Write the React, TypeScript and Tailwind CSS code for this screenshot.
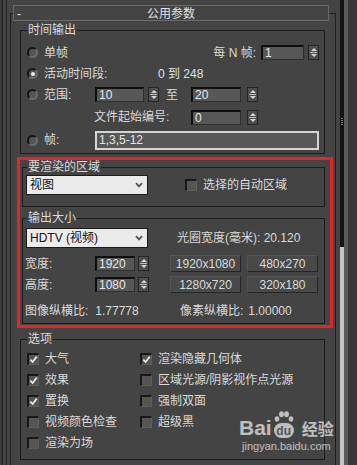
import React from 'react';

const Radio: React.FC<{ on?: boolean }> = ({ on }) => (
  <span className="flex h-[11px] w-[11px] shrink-0 items-center justify-center rounded-full border-2 border-[#151515] border-r-[#6a6a6a] border-b-[#6a6a6a] bg-[#555]">
    {on && <span className="h-[4px] w-[4px] rounded-full bg-[#f0f0f0]" />}
  </span>
);

const Spin: React.FC = () => (
  <span className="flex h-[15px] w-[11px] shrink-0 flex-col items-center justify-center gap-[1px] border border-[#252525] bg-[#4e4e4e]">
    <span className="h-0 w-0 border-x-[3px] border-b-[3px] border-x-transparent border-b-[#d6d6d6]" />
    <span className="h-px w-[7px] bg-[#bdbdbd]" />
    <span className="h-0 w-0 border-x-[3px] border-t-[3px] border-x-transparent border-t-[#d6d6d6]" />
  </span>
);

const Field: React.FC<{ v: string; w: string }> = ({ v, w }) => (
  <span className={`flex h-[15px] shrink-0 items-center border border-[#303030] border-t-2 border-l-2 border-t-[#0e0e0e] border-l-[#0e0e0e] bg-[#575757] pl-[2px] text-[#e4e9ef] ${w}`}>
    {v}
  </span>
);

const Check: React.FC<{ on?: boolean }> = ({ on }) => (
  <span className="flex h-[12px] w-[12px] shrink-0 items-center justify-center border border-[#5e5e5e] border-t-2 border-l-2 border-t-[#181818] border-l-[#181818] bg-[#555]">
    {on && (
      <svg viewBox="0 0 10 10" className="h-[9px] w-[9px]">
        <path d="M1.5 5.2 L4 7.8 L8.6 1.8" stroke="#ececec" strokeWidth="1.9" fill="none" />
      </svg>
    )}
  </span>
);

const Drop: React.FC<{ children: React.ReactNode }> = ({ children }) => (
  <span className="flex h-[20px] w-[122px] shrink-0 items-center justify-between border border-[#1a1a1a] bg-[#ebebeb] pl-[3px] pr-[4px] text-[#101018]">
    <span>{children}</span>
    <svg viewBox="0 0 8 6" className="h-[6px] w-[8px]">
      <path d="M1 1.2 L4 4.4 L7 1.2" stroke="#555" strokeWidth="1.8" fill="none" />
    </svg>
  </span>
);

const Btn: React.FC<{ t: string }> = ({ t }) => (
  <span className="flex h-[17px] w-[71px] shrink-0 items-center justify-center border border-[#262626] border-t-[#555] border-l-[#555] bg-[#494949]">
    {t}
  </span>
);

const CheckRow: React.FC<{ on?: boolean; t: string }> = ({ on, t }) => (
  <div className="flex h-[21px] items-center">
    <Check on={on} />
    <span className="ml-[6px] whitespace-nowrap">{t}</span>
  </div>
);

export default function App() {
  return (
    <div className="relative flex h-[465px] w-[357px] overflow-hidden bg-[#444] font-['Liberation_Sans','Noto_Sans_CJK_SC',sans-serif] text-[12px] leading-[16px] text-[#dadada]">
      {/* left edge */}
      <div className="flex h-full shrink-0">
        <div className="w-[2px] bg-[#3b3b3b]" />
        <div className="w-px bg-[#202020]" />
        <div className="w-[3px] bg-[#444]" />
        <div className="w-px bg-[#242424]" />
        <div className="w-[3px] bg-[#454545]" />
      </div>

      {/* rollout */}
      <div className="w-[326px] shrink-0 pt-[13px]">
        <div className="h-full border-x border-t border-[#1e1e1e]">
          <div className="-mt-[9px] ml-[2px] mr-[6px] grid h-[16px] grid-cols-[20px_1fr_20px] items-center border border-[#6b6b6b] bg-[#444] text-[#e2e2e2]">
            <span className="pl-[3px]">-</span>
            <span className="text-center">公用参数</span>
            <span />
          </div>

          <div className="ml-[9px] mr-[10px]">
            {/* 时间输出 */}
            <fieldset className="mt-[1px] border border-[#1c1c1c] pb-[2px]">
              <legend className="ml-[6px] px-[1px] leading-[16px]">时间输出</legend>
              <div className="pt-[4px]">
                <div className="flex h-[21px] items-center pl-[6px] pr-[5px]">
                  <Radio />
                  <span className="ml-[6px]">单帧</span>
                  <span className="ml-auto mr-[5px]">每 N 帧:</span>
                  <Field v="1" w="w-[43px]" />
                  <span className="ml-[4px]"><Spin /></span>
                </div>
                <div className="flex h-[21px] items-center pl-[6px]">
                  <span className="flex w-[131px] items-center">
                    <Radio on />
                    <span className="ml-[6px]">活动时间段:</span>
                  </span>
                  <span className="text-[#dde3ea]">0 到 248</span>
                </div>
                <div className="flex h-[21px] items-center pl-[6px]">
                  <span className="flex w-[68px] items-center">
                    <Radio />
                    <span className="ml-[6px]">范围:</span>
                  </span>
                  <Field v="10" w="w-[49px]" />
                  <span className="ml-[4px]"><Spin /></span>
                  <span className="ml-[7px]">至</span>
                  <span className="ml-[13px]"><Field v="20" w="w-[50px]" /></span>
                  <span className="ml-[6px]"><Spin /></span>
                </div>
                <div className="flex h-[24px] items-center pl-[73px]">
                  <span className="w-[97px]">文件起始编号:</span>
                  <Field v="0" w="w-[50px]" />
                  <span className="ml-[6px]"><Spin /></span>
                </div>
                <div className="flex h-[22px] items-center pl-[6px] pr-[5px]">
                  <span className="flex w-[68px] items-center">
                    <Radio />
                    <span className="ml-[6px]">帧:</span>
                  </span>
                  <span className="flex h-[19px] flex-1 items-center border-2 border-[#d4d4d4] bg-[#585858] pl-[2px] text-[#e6e6e6]">
                    1,3,5-12
                  </span>
                </div>
              </div>
            </fieldset>

            {/* highlighted area */}
            <div className="-ml-[3px] -mr-[8px] mt-[3px] border-[3px] border-[#e3242b] pb-[1px] pl-[2px] pr-[5px]">
              <fieldset className="border border-[#1c1c1c] pb-[11px]">
                <legend className="ml-[4px] px-[1px] leading-[14px]">要渲染的区域</legend>
                <div className="flex items-center pl-[3px] pt-[1px]">
                  <Drop>视图</Drop>
                  <span className="ml-[37px]"><Check /></span>
                  <span className="ml-[6px]">选择的自动区域</span>
                </div>
              </fieldset>

              <fieldset className="mt-[4px] border border-[#1c1c1c] pb-[1px]">
                <legend className="ml-[4px] px-[1px] leading-[14px]">输出大小</legend>
                <div className="flex items-center pl-[3px] pt-[3px]">
                  <Drop>HDTV (视频)</Drop>
                  <span className="ml-[29px] whitespace-nowrap">光圈宽度(毫米): 20.120</span>
                </div>
                <div className="mt-[5px] flex h-[21px] items-center pl-[2px]">
                  <span className="w-[70px]">宽度:</span>
                  <Field v="1920" w="w-[40px]" />
                  <span className="ml-[3px]"><Spin /></span>
                  <span className="ml-[21px]"><Btn t="1920x1080" /></span>
                  <span className="ml-[6px]"><Btn t="480x270" /></span>
                </div>
                <div className="flex h-[21px] items-center pl-[2px]">
                  <span className="w-[70px]">高度:</span>
                  <Field v="1080" w="w-[40px]" />
                  <span className="ml-[3px]"><Spin /></span>
                  <span className="ml-[21px]"><Btn t="1280x720" /></span>
                  <span className="ml-[6px]"><Btn t="320x180" /></span>
                </div>
                <div className="mt-[5px] flex h-[22px] items-center pl-[2px]">
                  <span className="w-[155px]">
                    图像纵横比:<span className="ml-[7px]">1.77778</span>
                  </span>
                  <span>
                    像素纵横比:<span className="ml-[5px]">1.00000</span>
                  </span>
                </div>
              </fieldset>
            </div>

            {/* 选项 */}
            <fieldset className="mt-[4px] border border-[#1c1c1c] pb-[6px]">
              <legend className="ml-[6px] px-[1px] leading-[14px]">选项</legend>
              <div className="grid grid-cols-[113px_1fr] pl-[6px] pt-[2px]">
                <CheckRow on t="大气" />
                <CheckRow on t="渲染隐藏几何体" />
                <CheckRow on t="效果" />
                <CheckRow t="区域光源/阴影视作点光源" />
                <CheckRow on t="置换" />
                <CheckRow t="强制双面" />
                <CheckRow t="视频颜色检查" />
                <CheckRow t="超级黑" />
                <CheckRow t="渲染为场" />
              </div>
            </fieldset>
          </div>
        </div>
      </div>

      {/* scroll strip */}
      <div className="flex h-full shrink-0">
        <div className="w-[4px] bg-[#444]" />
        <div className="flex w-[4px] flex-col">
          <div className="flex h-[247px] flex-col items-center bg-[#141414] pt-[118px]">
            <div className="flex flex-col gap-[1px]">
              <div className="h-px w-[2px] bg-[#777]" />
              <div className="h-px w-[2px] bg-[#777]" />
              <div className="h-px w-[2px] bg-[#777]" />
              <div className="h-px w-[2px] bg-[#777]" />
            </div>
          </div>
          <div className="flex-1 bg-[#c4c4c4]" />
        </div>
        <div className="w-[4px] bg-[#5a5a5a]" />
        <div className="w-[9px] bg-[#383838]" />
      </div>

      {/* watermark */}
      <div className="pointer-events-none absolute left-[239px] top-[411px] flex flex-col items-center text-white/65">
        <div className="flex items-end font-bold">
          <span className="text-[21px] leading-[26px]">Bai</span>
          <span className="relative ml-[2px] h-[30px] w-[20px]">
            <svg viewBox="0 0 20 12" className="absolute left-0 top-0 h-[12px] w-[20px]">
              <ellipse cx="3" cy="8" rx="2.3" ry="2.8" fill="currentColor" />
              <ellipse cx="7.5" cy="3.2" rx="2.4" ry="3" fill="currentColor" />
              <ellipse cx="12.5" cy="3.2" rx="2.4" ry="3" fill="currentColor" />
              <ellipse cx="17" cy="8" rx="2.3" ry="2.8" fill="currentColor" />
            </svg>
            <span className="absolute bottom-[3px] left-0 flex h-[15px] w-[20px] items-center justify-center rounded-[8px] bg-white/65 text-[12px] leading-[12px] text-[#555]">
              du
            </span>
          </span>
          <span className="ml-[8px] font-['Noto_Sans_CJK_SC',sans-serif] text-[16px] leading-[26px]">经验</span>
        </div>
        <div className="-mt-[1px] text-[11px] leading-[12px]">jingyan.baidu.com</div>
      </div>
    </div>
  );
}
